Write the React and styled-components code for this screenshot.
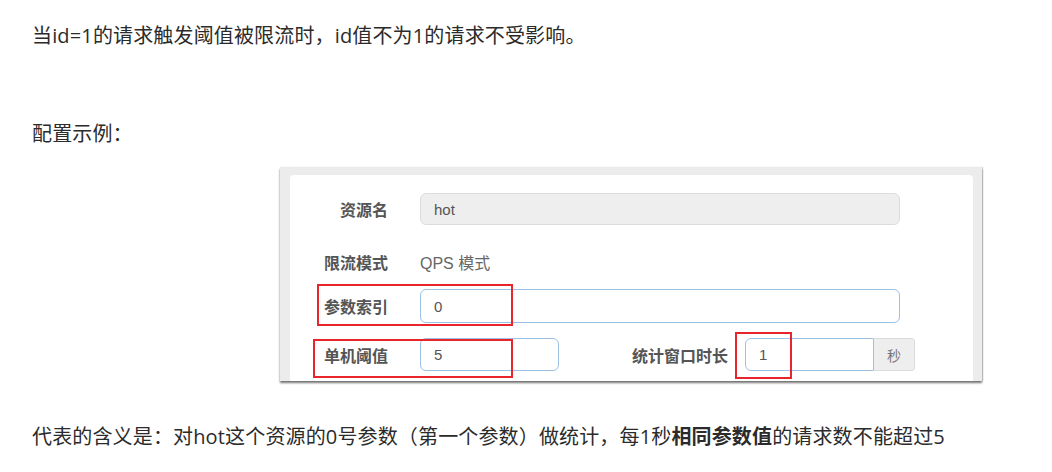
import React from 'react';
import styled, { createGlobalStyle } from 'styled-components';

const GlobalStyle = createGlobalStyle`
  body {
    margin: 0;
    background: #fff;
    font-family: "Open Sans", "Noto Sans CJK SC", sans-serif;
  }
`;

const Page = styled.div`
  width: 1052px;
  height: 472px;
  box-sizing: border-box;
  padding: 21px 0 0 32px;
  overflow: hidden;
  color: #2b2b2b;
`;

const Para = styled.p`
  margin: 0;
  margin-top: ${({ $mt }) => $mt || 0}px;
  font-size: 20px;
  line-height: 30px;
  white-space: nowrap;
  letter-spacing: 0.15px;

  b {
    font-weight: 700;
  }
`;

const Frame = styled.div`
  position: relative;
  margin: 18px 0 0 248px;
  width: 702px;
  box-sizing: border-box;
  padding: 8px 9px 0 10px;
  background: #ececec;
  box-shadow: 0 2px 2px rgba(0, 0, 0, 0.55), 1px 0 1px rgba(0, 0, 0, 0.12);
`;

const Panel = styled.div`
  background: #fff;
  border-radius: 4px 4px 0 0;
  height: 206px;
  box-sizing: border-box;
  padding-top: 18px;
  display: flex;
  flex-direction: column;
  font-family: "Liberation Sans", "Noto Sans CJK SC", sans-serif;
  overflow: hidden;
`;

const Row = styled.div`
  display: flex;
  align-items: center;
  height: ${({ $h }) => $h}px;
  margin-top: ${({ $mt }) => $mt || 0}px;
`;

const Label = styled.div`
  width: ${({ $w }) => $w || 98}px;
  text-align: right;
  font-size: 16px;
  font-weight: 700;
  color: #555;
  flex-shrink: 0;
`;

const Field = styled.div`
  margin-left: ${({ $ml }) => $ml ?? 32}px;
  width: ${({ $w }) => $w}px;
  height: 100%;
  box-sizing: border-box;
  display: flex;
  align-items: center;
  padding-left: 13px;
  font-size: 15px;
  color: #555;
  background: ${({ $disabled }) => ($disabled ? '#eeeeee' : '#fff')};
  border: 1px solid ${({ $disabled }) => ($disabled ? '#dcdcdc' : '#9dc1e4')};
  border-radius: ${({ $joined }) => ($joined ? '6px 0 0 6px' : '6px')};
`;

const Plain = styled.div`
  margin-left: 32px;
  font-size: 16px;
  color: #666;
`;

const Addon = styled.div`
  width: 41px;
  height: 100%;
  box-sizing: border-box;
  display: flex;
  align-items: center;
  justify-content: center;
  font-size: 14px;
  color: #777;
  background: #eee;
  border: 1px solid #dcdcdc;
  border-left: none;
  border-radius: 0 4px 4px 0;
`;

const Mark = styled.div`
  position: absolute;
  left: ${({ $x }) => $x}px;
  top: ${({ $y }) => $y}px;
  width: ${({ $w }) => $w}px;
  height: ${({ $h }) => $h}px;
  box-sizing: border-box;
  border: 2px solid #e8252b;
  pointer-events: none;
`;

export default function App() {
  return (
    <>
      <GlobalStyle />
      <Page>
        <Para>当id=1的请求触发阈值被限流时，id值不为1的请求不受影响。</Para>
        <Para $mt={68}>配置示例：</Para>

        <Frame>
          <Panel>
            <Row $h={32}>
              <Label>资源名</Label>
              <Field $w={480} $disabled>hot</Field>
            </Row>
            <Row $h={34} $mt={20}>
              <Label>限流模式</Label>
              <Plain>QPS 模式</Plain>
            </Row>
            <Row $h={34} $mt={10}>
              <Label>参数索引</Label>
              <Field $w={480}>0</Field>
            </Row>
            <Row $h={33} $mt={15}>
              <Label>单机阈值</Label>
              <Field $w={139}>5</Field>
              <Label $w={169}>统计窗口时长</Label>
              <Field $w={129} $ml={17} $joined>1</Field>
              <Addon>秒</Addon>
            </Row>
          </Panel>
          <Mark $x={37} $y={117} $w={196} $h={42} />
          <Mark $x={33} $y={172} $w={200} $h={39} />
          <Mark $x={455} $y={165} $w={57} $h={47} />
        </Frame>

        <Para $mt={41}>
          代表的含义是：对hot这个资源的0号参数（第一个参数）做统计，每1秒<b>相同参数值</b>的请求数不能超过5
        </Para>
      </Page>
    </>
  );
}
